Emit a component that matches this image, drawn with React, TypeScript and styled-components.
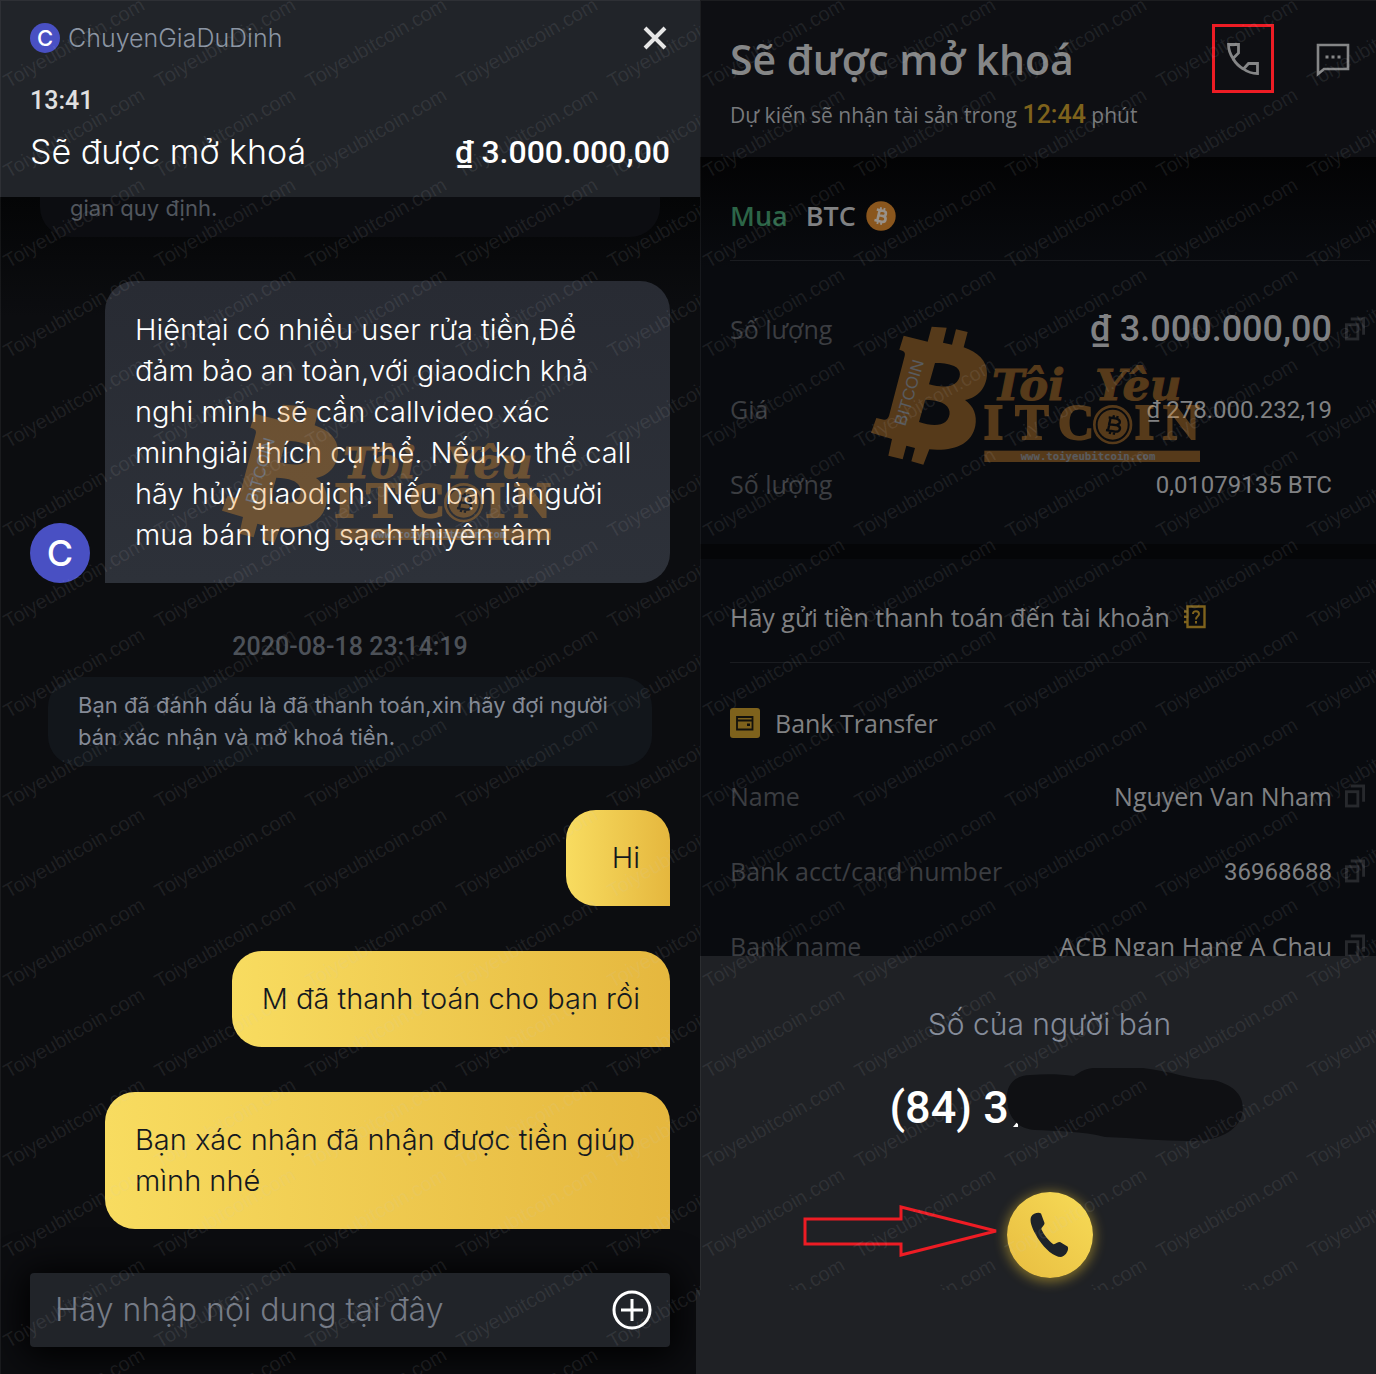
import React from "react";
import styled, { createGlobalStyle, css } from "styled-components";

const sans = `Inter, "Liberation Sans", sans-serif`;
const plex = `"Open Sans", "Noto Sans", sans-serif`;
const din = `Roboto, "Liberation Sans", sans-serif`;

const GlobalStyle = createGlobalStyle`
  *, *::before, *::after { box-sizing: border-box; }
  body { margin: 0; background: #0c0d10; }
  button { border: 0; padding: 0; background: none; font: inherit; color: inherit; cursor: pointer; }
  h1, h2, p, dl, dd, dt { margin: 0; font-weight: inherit; }
`;

const Page = styled.main`
  display: grid;
  grid-template-columns: 700fr 676fr;
  min-height: 100vh;
  font-family: ${sans};
`;

const Panel = styled.section<{ $bg: string }>`
  position: relative;
  display: flex;
  flex-direction: column;
  min-width: 0;
  background: ${(p) => p.$bg};
`;

/* ---------- watermark and logo overlays ---------- */

const WatermarkLayer = styled.div<{ $bottom: number }>`
  position: absolute;
  inset: 0 0 ${(p) => p.$bottom}px 0;
  overflow: hidden;
  pointer-events: none;
  border-top: 1px solid rgba(255, 255, 255, 0.06);
  border-left: 1px solid rgba(255, 255, 255, 0.06);
  display: grid;
  grid-template-columns: repeat(5, 151px);
  grid-auto-rows: 90px;
  z-index: 3;
`;

const WatermarkCell = styled.span`
  display: flex;
  align-items: flex-end;
  padding-left: 9px;
  font: 20px/20px "Liberation Sans", Arial, sans-serif;
  color: rgba(205, 207, 212, 0.1);
  white-space: nowrap;

  span {
    transform: rotate(-30deg);
    transform-origin: 0 100%;
  }
`;

function Watermark({ rows, bottom = 0 }: { rows: number; bottom?: number }) {
  return (
    <WatermarkLayer $bottom={bottom} aria-hidden="true">
      {Array.from({ length: rows * 5 }, (_, i) => (
        <WatermarkCell key={i}>
          <span>Toiyeubitcoin.com</span>
        </WatermarkCell>
      ))}
    </WatermarkLayer>
  );
}

const LogoSvg = styled.svg<{ $x: number; $y: number }>`
  position: absolute;
  left: ${(p) => p.$x}px;
  top: ${(p) => p.$y}px;
  width: 332px;
  height: 140px;
  opacity: 0.34;
  pointer-events: none;
  z-index: 2;
`;

function BrandLogo({ x, y }: { x: number; y: number }) {
  return (
    <LogoSvg $x={x} $y={y} viewBox="33 76 996 420" aria-hidden="true">
      <g fill="#e9952f">
        <path
          fillRule="evenodd"
          d="M131 105 L203 123 L215 78 L260 81 L249 126 L276 132 L288 86 L323 94 L311 140 C352 154 382 180 381 219 C380 262 352 291 315 298 C341 316 352 345 346 375 C335 430 285 452 208 446 L190 492 L154 482 L165 442 L139 435 L128 476 L85 465 L96 415 L33 396 L49 352 L72 357 C79 358 84 354 87 346 L134 166 C137 155 132 151 118 147 Z
             M225 187 L207 251 C240 260 267 260 283 250 C305 235 306 205 282 196 C264 188 245 187 225 187 Z
             M196 297 L177 364 C211 376 241 376 256 364 C276 346 273 317 246 306 C230 299 213 297 196 297 Z"
        />
        <g
          fontFamily='"DejaVu Serif", serif'
          fontWeight="700"
          fontStyle="italic"
          fontSize="130"
          stroke="#e9952f"
          strokeWidth="3"
        >
          <text x="396" y="299">Tôi</text>
          <text x="706" y="299">Yêu</text>
        </g>
        <g
          fontFamily='"Liberation Serif", serif'
          fontWeight="700"
          fontSize="150"
          stroke="#e9952f"
          strokeWidth="6"
        >
          <text x="371" y="416">I</text>
          <text x="466" y="416">T</text>
          <text x="594" y="416">C</text>
          <text x="824" y="416">I</text>
          <text x="910" y="416">N</text>
        </g>
        <circle cx="758" cy="372" r="45" />
        <rect x="373" y="450" width="647" height="34" />
      </g>
      <circle cx="758" cy="372" r="55" fill="none" stroke="#e9952f" strokeWidth="8" />
      <path
        d="M746 350 L769 354 C784 358 782 370 770 372 M744 370 L772 374 C786 380 780 394 766 393 L738 388 M752 350 L744 390 M762 344 L760 352 M751 392 L749 400 M773 346 L771 354 M763 394 L761 402"
        fill="none"
        stroke="#0b0d11"
        strokeWidth="7"
      />
      <text
        x="482"
        y="478"
        fill="#f2f4fa"
        fontFamily='"DejaVu Sans Mono", monospace'
        fontWeight="700"
        fontSize="32"
      >
        www.toiyeubitcoin.com
      </text>
      <text
        transform="translate(136 378) rotate(-74)"
        fill="#f2f4fa"
        fontFamily='"Liberation Sans", sans-serif'
        fontSize="50"
      >
        BITCOIN
      </text>
    </LogoSvg>
  );
}

/* ---------- chat panel ---------- */

const ChatHeader = styled.header`
  display: flex;
  flex-direction: column;
  height: 197px;
  padding: 18px 30px 0;
  background: #212429;
`;

const Spread = styled.div`
  display: flex;
  align-items: center;
  justify-content: space-between;
`;

const Person = styled.div`
  display: flex;
  align-items: center;
  gap: 8px;
  font-size: 25px;
  line-height: 40px;
  font-weight: 300;
  color: #8b95a3;
`;

const Avatar = styled.span<{ $size: number }>`
  display: flex;
  align-items: center;
  justify-content: center;
  flex: none;
  width: ${(p) => p.$size}px;
  height: ${(p) => p.$size}px;
  border-radius: 50%;
  background: #4950c3;
  color: #fff;
  font-family: ${sans};
  font-weight: 500;
  font-size: ${(p) => (p.$size > 40 ? 36 : 22)}px;
  line-height: 1;
`;

const Clock = styled.time`
  margin-top: 27px;
  font: 500 25px/32px ${din};
  color: #e0e0e0;
`;

const StatusRow = styled(Spread)`
  margin-top: 15px;
  line-height: 40px;
  color: #fff;
`;

const StatusTitle = styled.h1`
  font-size: 34px;
  font-weight: 300;
`;

const Amount = styled.strong`
  font: 500 32px/40px ${din};
`;

const Messages = styled.div`
  display: flex;
  flex-direction: column;
  background: linear-gradient(#040506, #0c0d10 120px);
`;

const Notice = styled.p<{ $clipped?: boolean }>`
  font-size: 22px;
  ${(p) =>
    p.$clipped
      ? css`
          margin: 0 40px;
          padding: 0 30px 18px;
          border-radius: 0 0 30px 30px;
          background: #0c0d11;
          line-height: 22px;
          color: #51565e;
        `
      : css`
          margin: 14px 48px 0;
          padding: 12px 30px 13px;
          border-radius: 30px;
          background: #12161b;
          line-height: 32px;
          color: #848a96;
        `}
`;

const IncomingRow = styled.div`
  display: flex;
  align-items: flex-end;
  gap: 15px;
  margin: 44px 30px 0;
`;

const bubbleText = css`
  font-size: 29px;
  font-weight: 300;
  line-height: 41px;
`;

const Incoming = styled.p`
  ${bubbleText}
  flex: 1;
  padding: 28px 30px;
  border-radius: 30px 30px 30px 0;
  background: linear-gradient(#282b33, #2d3139);
  color: #fff;
`;

const Stamp = styled.time`
  margin-top: 47px;
  text-align: center;
  font: 500 25px/33px ${din};
  color: #4c5158;
`;

const Outgoing = styled.p<{ $short?: boolean }>`
  ${bubbleText}
  align-self: flex-end;
  min-width: 104px;
  max-width: calc(100% - 135px);
  margin: ${(p) => (p.$short ? 44 : 45)}px 30px 0;
  padding: 27px 30px 28px;
  border-radius: 30px 30px 0 30px;
  background: linear-gradient(90deg, #f8dc60, #e5b73e);
  color: #14181e;
  text-align: ${(p) => (p.$short ? "right" : "left")};
`;

const Composer = styled.form`
  display: flex;
  align-items: center;
  gap: 16px;
  margin: 44px 30px 27px;
  height: 74px;
  padding: 0 18px 0 25px;
  border-radius: 4px;
  background: #212429;
  box-shadow: 0 4px 36px 6px #000;
`;

const Field = styled.input`
  flex: 1;
  min-width: 0;
  border: 0;
  outline: 0;
  padding: 0;
  background: none;
  font: 300 32px/40px ${sans};
  color: #fff;

  &::placeholder {
    color: #757b86;
    opacity: 1;
  }
`;

const IconButton = styled.button`
  display: flex;
  flex: none;
`;

/* ---------- order panel ---------- */

const OrderHeader = styled.header`
  display: flex;
  justify-content: space-between;
  height: 157px;
  padding: 24px 26px 0 30px;
  background: #0e0f13;
  color: #858687;
  font-family: ${plex};
`;

const OrderTitle = styled.h2`
  font-size: 41px;
  line-height: 70px;
  font-weight: 600;
`;

const OrderSub = styled.p`
  margin-top: 4px;
  font-size: 21px;
  line-height: 34px;
  color: #77797c;
`;

const Countdown = styled.b`
  font: 500 25px/34px ${din};
  color: #7e621c;
`;

const HeaderActions = styled.div`
  display: flex;
  gap: 42px;
`;

const CallIconButton = styled(IconButton)`
  align-items: center;
  justify-content: center;
  width: 62px;
  height: 69px;
  border: 3px solid #ed1c24;
`;

const ChatIconButton = styled(IconButton)`
  align-self: flex-start;
  margin-top: 19px;
`;

const OrderBody = styled.div`
  padding: 0 6px 0 30px;
  font-family: ${plex};
  font-size: 25px;
  color: #808183;
`;

const Trade = styled(OrderBody)`
  padding-bottom: 23px;
  background: linear-gradient(#030304, #090b0f 110px);
`;

const Account = styled(OrderBody)`
  border-top: 15px solid #050608;
  background: #090b0f;
`;

const Line = styled.div<{ $gap: number }>`
  display: flex;
  align-items: center;
  gap: ${(p) => p.$gap}px;
  height: 104px;
  padding-top: 12px;
  border-bottom: 1px solid #1a1c20;
`;

const Pair = styled(Line)`
  padding-top: 14px;
  font-size: 27px;
  font-weight: 600;
`;

const Buy = styled.span`
  margin-right: 8px;
  color: #2c6547;
`;

const Rows = styled.dl<{ $top?: number }>`
  padding-top: ${(p) => p.$top ?? 0}px;
`;

const Row = styled.div<{ $tall?: boolean }>`
  display: grid;
  grid-template-columns: auto 1fr 20px;
  column-gap: 13px;
  align-items: center;
  height: ${(p) => (p.$tall ? 84 : 75)}px;
  padding-right: 5px;
`;

const Term = styled.dt`
  color: #3b3d41;
`;

const Value = styled.dd<{ $kind?: "digits" | "total" }>`
  text-align: right;
  ${(p) => p.$kind === "digits" && css`padding-top: 2px; font: 400 24px/32px ${din};`}
  ${(p) => p.$kind === "total" && css`font: 500 36px/40px ${din};`}
`;

const Method = styled.div`
  display: flex;
  align-items: center;
  gap: 15px;
  height: 95px;
  padding-top: 25px;
`;

/* ---------- call sheet ---------- */

const Sheet = styled.aside`
  position: relative;
  z-index: 1;
  flex: 1;
  display: flex;
  flex-direction: column;
  align-items: center;
  margin-top: -27px;
  padding: 48px 0 84px 23px;
  background: #1f2125;
`;

const SheetFoot = styled.div`
  position: absolute;
  inset: auto 0 0 -4px;
  height: 84px;
  background: #1f2125;
`;

const SheetTitle = styled.h2`
  font-size: 30px;
  line-height: 40px;
  font-weight: 300;
  color: #858c9a;
`;

const Phone = styled.p`
  position: relative;
  width: 320px;
  margin-top: 34px;
  font: 500 45px/60px ${din};
  color: #fff;
`;

const Redaction = styled.svg`
  position: absolute;
  left: 115px;
  top: -13px;
  width: 240px;
  height: 78px;
`;

const CallArea = styled.div`
  position: relative;
  margin-top: 54px;
`;

const CallButton = styled.button`
  display: flex;
  align-items: center;
  justify-content: center;
  width: 86px;
  height: 86px;
  border-radius: 50%;
  background: linear-gradient(45deg, #e8bd40, #f7db57);
  box-shadow: 0 2px 12px 2px rgba(240, 200, 50, 0.45);
`;

const Arrow = styled.svg`
  position: absolute;
  right: 94px;
  top: 12px;
  width: 196px;
  height: 54px;
`;

/* ---------- icons ---------- */

const CopyIcon = () => (
  <svg width="21" height="24" viewBox="0 0 21 24" fill="none" stroke="#27292d" strokeWidth="3">
    <rect x="1.5" y="7.5" width="12" height="15" />
    <path d="M6 1.5H19.5V18" />
  </svg>
);

const CoinIcon = () => (
  <svg width="30" height="30" viewBox="0 0 30 30" aria-hidden="true">
    <circle cx="15" cy="15" r="14.7" fill="#8a561d" />
    <g transform="rotate(13 15 15)" fill="none" stroke="#98918a" strokeWidth="2.6">
      <path d="M9.5 9.6H16.5C20.2 9.6 20.2 14.6 16.5 14.6H12.4M16.8 14.6C21.3 14.6 21.3 20.4 16.8 20.4H9.5M12.4 9.6V20.4" />
      <path d="M13.2 6.4V9.6M16.8 6.4V9.6M13.2 20.4V23.6M16.8 20.4V23.6" strokeWidth="1.9" />
    </g>
  </svg>
);

const CloseIcon = () => (
  <svg width="30" height="30" viewBox="0 0 30 30" stroke="#e6e6e6" strokeWidth="4">
    <path d="M5 5L25 25M25 5L5 25" />
  </svg>
);

const PlusIcon = () => (
  <svg width="40" height="40" viewBox="0 0 40 40" fill="none" stroke="#fff" strokeWidth="3">
    <circle cx="20" cy="20" r="18" />
    <path d="M20 9V31M9 20H31" />
  </svg>
);

const HandsetOutlineIcon = () => (
  <svg width="32" height="32" viewBox="0 0 32 32" fill="none" stroke="#858687" strokeWidth="2.8">
    <path d="M1.5 1.5H11.5V10L6 15.5C3 11 1.5 6 1.5 1.5Z" />
    <path d="M6 15.5C8.5 20 12 23.5 16.5 26" />
    <path d="M16.5 26L21.5 20.5H30.5V30.5C25 30.5 20.5 29 16.5 26Z" />
  </svg>
);

const SpeechIcon = () => (
  <svg width="34" height="34" viewBox="0 0 34 34" fill="none" stroke="#858687" strokeWidth="2.6">
    <path d="M2 2H32V26H8L2 31Z" />
    <path d="M9.5 14H24.5" strokeWidth="3" strokeDasharray="3 3" />
  </svg>
);

const GuideIcon = () => (
  <svg width="22" height="24" viewBox="0 0 22 24" fill="none" stroke="#7e621c" strokeWidth="2.4" aria-hidden="true">
    <path d="M3.5 1.5H20.5V22H3.5Z M0 6.5H4M0 11.7H4M0 17H4" />
    <path d="M9 9C9 5 15 5.5 15 9C15 11.5 12 11 12 14.5M12 16V18.5" strokeWidth="2" />
  </svg>
);

const CardIcon = () => (
  <svg width="30" height="30" viewBox="0 0 30 30" aria-hidden="true">
    <rect width="30" height="30" rx="3" fill="#7e621c" />
    <path d="M7 9H22.5V21.5H7Z M7 12.5H22.5" fill="none" stroke="#12110c" strokeWidth="1.8" />
    <rect x="17" y="15.5" width="3" height="2.5" fill="#12110c" />
  </svg>
);

const HandsetIcon = () => (
  <svg width="39" height="46" viewBox="0 0 39 46" fill="#1e2329">
    <path d="M1 5C3 1 9 0 11 1.5L14.5 11C14.5 14 11 15 11.5 17.5C14 23 19 29 23 32C25 33 27 30 30 30L37.5 34.5C39.5 37 36 44 31 45C24 45 15 37 9 28C4 20 -1 11 1 5Z" />
  </svg>
);

function CopyButton({ what }: { what: string }) {
  return (
    <IconButton type="button" aria-label={`Copy ${what}`}>
      <CopyIcon />
    </IconButton>
  );
}

const accountRows = [
  { term: "Name", value: "Nguyen Van Nham" },
  { term: "Bank acct/card number", value: "36968688", digits: true },
  { term: "Bank name", value: "ACB Ngan Hang A Chau" },
];

function ChatPanel() {
  return (
    <Panel $bg="#0c0d10">
      <ChatHeader>
        <Spread>
          <Person>
            <Avatar $size={30}>C</Avatar>
            ChuyenGiaDuDinh
          </Person>
          <IconButton type="button" aria-label="Close">
            <CloseIcon />
          </IconButton>
        </Spread>
        <Clock>13:41</Clock>
        <StatusRow>
          <StatusTitle>Sẽ được mở khoá</StatusTitle>
          <Amount>₫ 3.000.000,00</Amount>
        </StatusRow>
      </ChatHeader>

      <Messages>
        <Notice $clipped>gian quy định.</Notice>
        <IncomingRow>
          <Avatar $size={60}>C</Avatar>
          <Incoming>
            Hiệntại có nhiều user rửa tiền,Để
            <br />
            đảm bảo an toàn,với giaodich khả
            <br />
            nghi mình sẽ cần callvideo xác
            <br />
            minhgiải thích cụ thể. Nếu ko thể call
            <br />
            hãy hủy giaodịch. Nếu bạn làngười
            <br />
            mua bán trong sạch thìyên tâm
          </Incoming>
        </IncomingRow>
        <Stamp>2020-08-18 23:14:19</Stamp>
        <Notice>
          Bạn đã đánh dấu là đã thanh toán,xin hãy đợi người
          <br />
          bán xác nhận và mở khoá tiền.
        </Notice>
        <Outgoing $short>Hi</Outgoing>
        <Outgoing>M đã thanh toán cho bạn rồi</Outgoing>
        <Outgoing>Bạn xác nhận đã nhận được tiền giúp mình nhé</Outgoing>
      </Messages>

      <Composer onSubmit={(e) => e.preventDefault()}>
        <Field aria-label="Tin nhắn" placeholder="Hãy nhập nội dung tại đây" />
        <IconButton type="button" aria-label="Thêm">
          <PlusIcon />
        </IconButton>
      </Composer>

      <BrandLogo x={222} y={404} />
      <Watermark rows={16} />
    </Panel>
  );
}

function OrderPanel() {
  return (
    <Panel $bg="#1f2125">
      <OrderHeader>
        <div>
          <OrderTitle>Sẽ được mở khoá</OrderTitle>
          <OrderSub>
            Dự kiến sẽ nhận tài sản trong <Countdown>12:44</Countdown> phút
          </OrderSub>
        </div>
        <HeaderActions>
          <CallIconButton type="button" aria-label="Gọi">
            <HandsetOutlineIcon />
          </CallIconButton>
          <ChatIconButton type="button" aria-label="Nhắn tin">
            <SpeechIcon />
          </ChatIconButton>
        </HeaderActions>
      </OrderHeader>

      <Trade>
        <Pair $gap={10}>
          <Buy>Mua</Buy>
          BTC
          <CoinIcon />
        </Pair>
        <Rows $top={26}>
          <Row $tall>
            <Term>Số lượng</Term>
            <Value $kind="total">₫ 3.000.000,00</Value>
            <CopyButton what="số lượng" />
          </Row>
          <Row>
            <Term>Giá</Term>
            <Value $kind="digits">₫ 278.000.232,19</Value>
          </Row>
          <Row>
            <Term>Số lượng</Term>
            <Value $kind="digits">0,01079135 BTC</Value>
          </Row>
        </Rows>
      </Trade>

      <Account>
        <Line $gap={14}>
          Hãy gửi tiền thanh toán đến tài khoản
          <GuideIcon />
        </Line>
        <Method>
          <CardIcon />
          Bank Transfer
        </Method>
        <Rows>
          {accountRows.map((r) => (
            <Row key={r.term}>
              <Term>{r.term}</Term>
              <Value $kind={r.digits ? "digits" : undefined}>{r.value}</Value>
              <CopyButton what={r.term} />
            </Row>
          ))}
        </Rows>
      </Account>

      <Sheet>
        <SheetFoot />
        <SheetTitle>Số của người bán</SheetTitle>
        <Phone>
          (84) 3
          <Redaction viewBox="0 0 240 78" aria-hidden="true">
            <path d="M8 62L13 56V62Z" fill="#fff" />
            <path
              d="M26 10C8 10 1 22 2 34C3 54 14 64 30 65C50 66 78 66 100 72C130 73 156 76 186 76C214 76 232 66 237 50C241 32 230 20 208 15C186 15 166 6 138 3H88C78 4 74 8 69 11C54 9 40 9 26 10Z"
              fill="#0f1013"
            />
          </Redaction>
        </Phone>
        <CallArea>
          <Arrow viewBox="0 0 196 54" aria-hidden="true">
            <path d="M2 15H98V3L193 27L98 51V40H2Z" fill="none" stroke="#ed1c24" strokeWidth="3" />
          </Arrow>
          <CallButton type="button" aria-label="Gọi người bán">
            <HandsetIcon />
          </CallButton>
        </CallArea>
      </Sheet>

      <BrandLogo x={171} y={326} />
      <Watermark rows={15} bottom={84} />
    </Panel>
  );
}

export default function App() {
  return (
    <>
      <GlobalStyle />
      <Page>
        <ChatPanel />
        <OrderPanel />
      </Page>
    </>
  );
}
